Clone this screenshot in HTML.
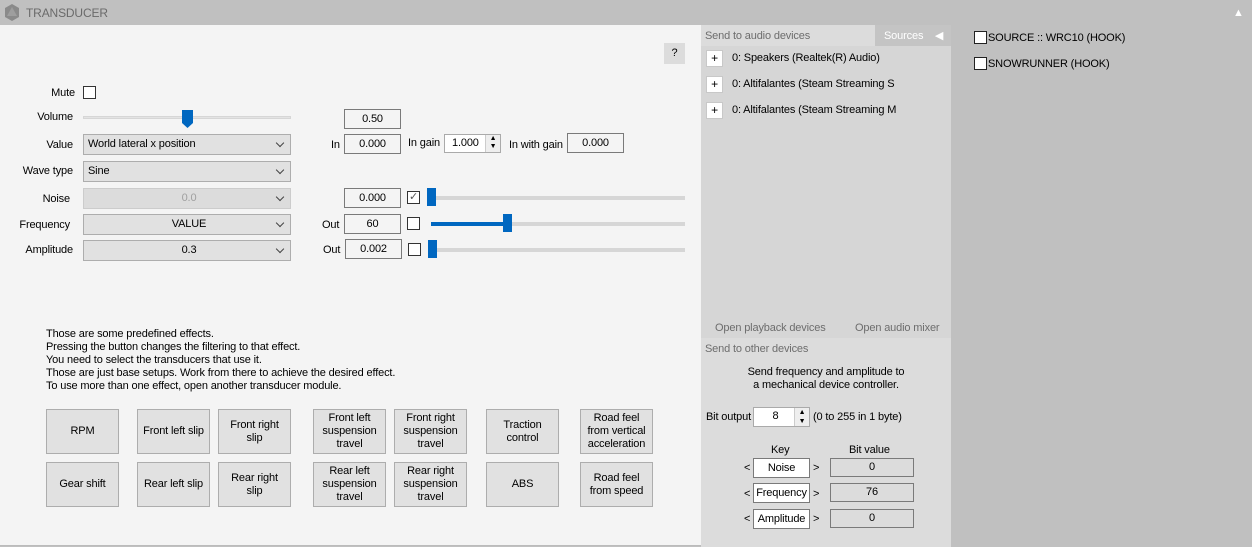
<!DOCTYPE html>
<html><head><meta charset="utf-8"><style>
*{box-sizing:border-box;margin:0;padding:0}
body{width:1252px;height:547px;overflow:hidden;background:#c0c0c0;font-family:"Liberation Sans",sans-serif;font-size:11px;letter-spacing:-0.15px;color:#000;position:relative}
div,span{position:absolute}
.t{white-space:nowrap;line-height:14px}
.r{text-align:right}
.box{border:1px solid #7a7a7a;background:#f4f4f4;text-align:center;line-height:18px}
.cb{width:13px;height:13px;border:1px solid #333;background:#fff}
.combo{background:#e1e1e1;border:1px solid #adadad;height:21px;width:208px;line-height:19px;padding-left:4px}
.combo:after{content:"";position:absolute;right:7px;top:5px;width:5px;height:5px;border-right:1px solid #444;border-bottom:1px solid #444;transform:rotate(45deg)}
.track{height:4px;background:#d6d6d6}
.thumb{width:10px;height:18px;background:#0067c0}
.btn{background:#e1e1e1;border:1px solid #adadad;width:73px;height:45px;display:flex;align-items:center;justify-content:center;text-align:center;line-height:13px}
.plus{width:17px;height:17px;background:#fff;border:1px solid #c8c8c8;text-align:center;line-height:15px;font-size:12px}
.wb{background:#fff;border:1px solid #7a7a7a;text-align:center;line-height:18px}
.vb{background:#dcdcdc;border:1px solid #7a7a7a;text-align:center;line-height:17px}
</style></head><body>
<svg style="position:absolute;left:4px;top:4px" width="16" height="17"><polygon points="8,0 15,4 15,13 8,17 1,13 1,4" fill="#8a8a8a"/><polygon points="8,3 13,12 3,12" fill="#9e9e9e"/></svg>
<div class="t" style="left:26px;top:6px;color:#6a6a6a;font-size:12px">TRANSDUCER</div>
<div class="t" style="left:1233px;top:6px;color:#fff;font-size:11px">▲</div>

<div style="left:0;top:25px;width:701px;height:521px;background:#f4f4f4;border-bottom:1px solid #bbb"></div>
<div style="left:664px;top:43px;width:21px;height:21px;background:#dcdcdc;text-align:center;line-height:21px">?</div>

<div class="t r" style="left:0;width:75px;top:86px">Mute</div>
<div class="cb" style="left:83px;top:86px"></div>
<div class="t r" style="left:0;width:73px;top:110px">Volume</div>
<div class="track" style="left:83px;top:116px;width:208px;height:3px;background:#e3e3e3;border:1px solid #d6d6d6"></div>
<svg style="position:absolute;left:182px;top:110px" width="11" height="18"><polygon points="0,0 11,0 11,13 5.5,18 0,13" fill="#0067c0"/></svg>
<div class="box" style="left:344px;top:109px;width:57px;height:20px">0.50</div>

<div class="t r" style="left:0;width:73px;top:138px">Value</div>
<div class="combo" style="left:83px;top:134px">World lateral x position</div>
<div class="t" style="left:331px;top:138px">In</div>
<div class="box" style="left:344px;top:134px;width:57px;height:20px">0.000</div>
<div class="t" style="left:408px;top:136px">In gain</div>
<div class="wb" style="left:444px;top:134px;width:57px;height:19px;text-align:left;padding-left:7px;border-color:#aaa;line-height:16px">1.000</div>
<div style="left:485px;top:135px;width:15px;height:17px;border-left:1px solid #ccc;background:#eee;font-size:7px;line-height:8px;text-align:center">▲<br>▼</div>
<div class="t" style="left:509px;top:138px">In with gain</div>
<div class="box" style="left:567px;top:133px;width:57px;height:20px">0.000</div>

<div class="t r" style="left:0;width:73px;top:164px">Wave type</div>
<div class="combo" style="left:83px;top:161px">Sine</div>

<div class="t r" style="left:0;width:70px;top:192px">Noise</div>
<div class="combo" style="left:83px;top:188px;background:#dcdcdc;border-color:#ccc;color:#a0a0a0;text-align:center">0.0</div>
<div class="box" style="left:344px;top:188px;width:57px;height:20px">0.000</div>
<div class="cb" style="left:407px;top:191px;text-align:center;line-height:11px;font-size:11px;color:#555">✓</div>
<div class="track" style="left:430px;top:196px;width:255px"></div>
<div class="thumb" style="left:427px;top:188px;width:9px"></div>

<div class="t r" style="left:0;width:70px;top:218px">Frequency</div>
<div class="combo" style="left:83px;top:214px;text-align:center">VALUE</div>
<div class="t" style="left:322px;top:218px">Out</div>
<div class="box" style="left:344px;top:214px;width:57px;height:20px">60</div>
<div class="cb" style="left:407px;top:217px"></div>
<div class="track" style="left:431px;top:222px;width:254px"></div>
<div class="track" style="left:431px;top:222px;width:75px;background:#0067c0"></div>
<div class="thumb" style="left:503px;top:214px;width:9px"></div>

<div class="t r" style="left:0;width:73px;top:243px">Amplitude</div>
<div class="combo" style="left:83px;top:240px;text-align:center">0.3</div>
<div class="t" style="left:323px;top:243px">Out</div>
<div class="box" style="left:345px;top:239px;width:57px;height:20px">0.002</div>
<div class="cb" style="left:408px;top:243px"></div>
<div class="track" style="left:431px;top:248px;width:254px"></div>
<div class="thumb" style="left:428px;top:240px;width:9px"></div>

<div class="t" style="left:46px;top:328px;line-height:13px">Those are some predefined effects.<br>Pressing the button changes the filtering to that effect.<br>You need to select the transducers that use it.<br>Those are just base setups. Work from there to achieve the desired effect.<br>To use more than one effect, open another transducer module.</div>

<div class="btn" style="left:46px;top:409px">RPM</div>
<div class="btn" style="left:137px;top:409px">Front left slip</div>
<div class="btn" style="left:218px;top:409px">Front right<br>slip</div>
<div class="btn" style="left:313px;top:409px">Front left<br>suspension<br>travel</div>
<div class="btn" style="left:394px;top:409px">Front right<br>suspension<br>travel</div>
<div class="btn" style="left:486px;top:409px">Traction<br>control</div>
<div class="btn" style="left:580px;top:409px">Road feel<br>from vertical<br>acceleration</div>
<div class="btn" style="left:46px;top:462px">Gear shift</div>
<div class="btn" style="left:137px;top:462px">Rear left slip</div>
<div class="btn" style="left:218px;top:462px">Rear right<br>slip</div>
<div class="btn" style="left:313px;top:462px">Rear left<br>suspension<br>travel</div>
<div class="btn" style="left:394px;top:462px">Rear right<br>suspension<br>travel</div>
<div class="btn" style="left:486px;top:462px">ABS</div>
<div class="btn" style="left:580px;top:462px">Road feel<br>from speed</div>

<div style="left:701px;top:25px;width:250px;height:522px;background:#d6d6d6"></div>
<div style="left:701px;top:25px;width:174px;height:21px;background:#dcdcdc"></div>
<div style="left:875px;top:25px;width:76px;height:21px;background:#c4c4c4"></div>
<div class="t" style="left:705px;top:29px;color:#6d6d6d">Send to audio devices</div>
<div class="t" style="left:884px;top:29px;color:#fff">Sources&nbsp;&nbsp;&nbsp;&nbsp;◀</div>
<div class="plus" style="left:706px;top:50px">+</div><div class="t" style="left:732px;top:51px">0: Speakers (Realtek(R) Audio)</div>
<div class="plus" style="left:706px;top:76px">+</div><div class="t" style="left:732px;top:77px">0: Altifalantes (Steam Streaming S</div>
<div class="plus" style="left:706px;top:102px">+</div><div class="t" style="left:732px;top:103px">0: Altifalantes (Steam Streaming M</div>
<div class="t" style="left:715px;top:321px;color:#6d6d6d">Open playback devices</div>
<div class="t" style="left:855px;top:321px;color:#6d6d6d">Open audio mixer</div>
<div style="left:701px;top:338px;width:250px;height:209px;background:#dcdcdc"></div>
<div class="t" style="left:705px;top:342px;color:#6d6d6d">Send to other devices</div>
<div class="t" style="left:701px;width:250px;top:366px;text-align:center;line-height:13px">Send frequency and amplitude to<br>a mechanical device controller.</div>
<div class="t" style="left:706px;top:410px">Bit output</div>
<div class="wb" style="left:753px;top:407px;width:57px;height:20px;border-color:#aaa;padding-right:12px;line-height:16px">8</div>
<div style="left:794px;top:408px;width:15px;height:18px;border-left:1px solid #ccc;background:#eee;font-size:7px;line-height:9px;text-align:center">▲<br>▼</div>
<div class="t" style="left:813px;top:410px">(0 to 255 in 1 byte)</div>
<div class="t" style="left:771px;top:443px">Key</div>
<div class="t" style="left:849px;top:443px">Bit value</div>
<div class="t" style="left:744px;top:461px">&lt;</div><div class="wb" style="left:753px;top:458px;width:57px;height:20px">Noise</div><div class="t" style="left:813px;top:461px">&gt;</div><div class="vb" style="left:830px;top:458px;width:84px;height:19px">0</div>
<div class="t" style="left:744px;top:487px">&lt;</div><div class="wb" style="left:753px;top:483px;width:57px;height:20px">Frequency</div><div class="t" style="left:813px;top:487px">&gt;</div><div class="vb" style="left:830px;top:483px;width:84px;height:19px">76</div>
<div class="t" style="left:744px;top:512px">&lt;</div><div class="wb" style="left:753px;top:509px;width:57px;height:20px">Amplitude</div><div class="t" style="left:813px;top:512px">&gt;</div><div class="vb" style="left:830px;top:509px;width:84px;height:19px">0</div>

<div class="cb" style="left:974px;top:31px;border-color:#222"></div><div class="t" style="left:988px;top:31px">SOURCE :: WRC10 (HOOK)</div>
<div class="cb" style="left:974px;top:57px;border-color:#222"></div><div class="t" style="left:988px;top:57px">SNOWRUNNER (HOOK)</div>
</body></html>
